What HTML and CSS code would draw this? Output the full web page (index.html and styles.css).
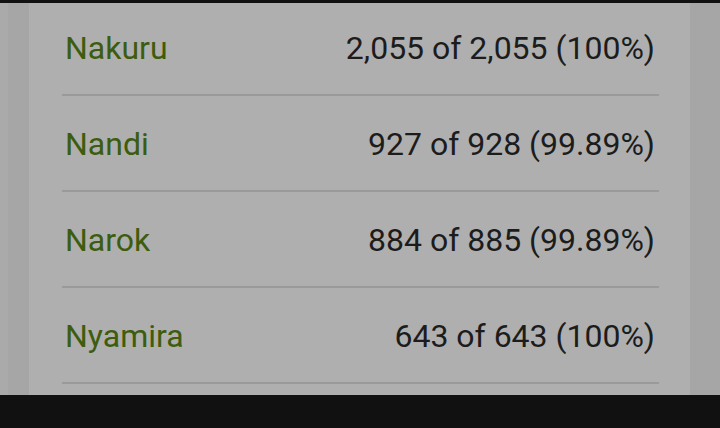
FILE: index.html
```html
<!DOCTYPE html>
<html>
<head>
<meta charset="utf-8">
<link rel="stylesheet" href="styles.css">
</head>
<body>
<div class="status-bar"></div>
<div class="page">
  <div class="card">
    <div class="row"><span class="name">Nakuru</span><span class="value">2,055 of 2,055 (100%)</span></div>
    <div class="row"><span class="name">Nandi</span><span class="value">927 of 928 (99.89%)</span></div>
    <div class="row"><span class="name">Narok</span><span class="value">884 of 885 (99.89%)</span></div>
    <div class="row"><span class="name">Nyamira</span><span class="value">643 of 643 (100%)</span></div>
  </div>
</div>
<div class="nav-bar"></div>
</body>
</html>
```
FILE: styles.css
```css
html, body {
  margin: 0;
  padding: 0;
  height: 100%;
  overflow: hidden;
}
body {
  background: #a7a7a7;
  font-family: Roboto, "Liberation Sans", sans-serif;
}
.status-bar {
  position: fixed;
  top: 0;
  left: 0;
  right: 0;
  height: 3px;
  background: #111;
  z-index: 2;
}
.nav-bar {
  position: fixed;
  left: 0;
  right: 0;
  bottom: 0;
  height: 33px;
  background: #111;
  z-index: 2;
}
.page {
  display: flex;
  justify-content: center;
  padding: 0 30px 0 29px;
  height: 100%;
  box-sizing: border-box;
  background: linear-gradient(to right, #aaaaaa 0, #aaaaaa 8px, #a6a6a6 8px, #a6a6a6 100%);
}
.card {
  flex: 1;
  background: #afafaf;
  padding: 0 31px 0 33px;
}
.row {
  height: 96px;
  box-sizing: border-box;
  border-bottom: 2px solid #9a9a9a;
  display: flex;
  align-items: center;
  justify-content: space-between;
  font-size: 32px;
  padding: 1px 4px 0 3px;
}
.name {
  color: #3d5c0e;
}
.value {
  color: #1c1c1c;
}
```
